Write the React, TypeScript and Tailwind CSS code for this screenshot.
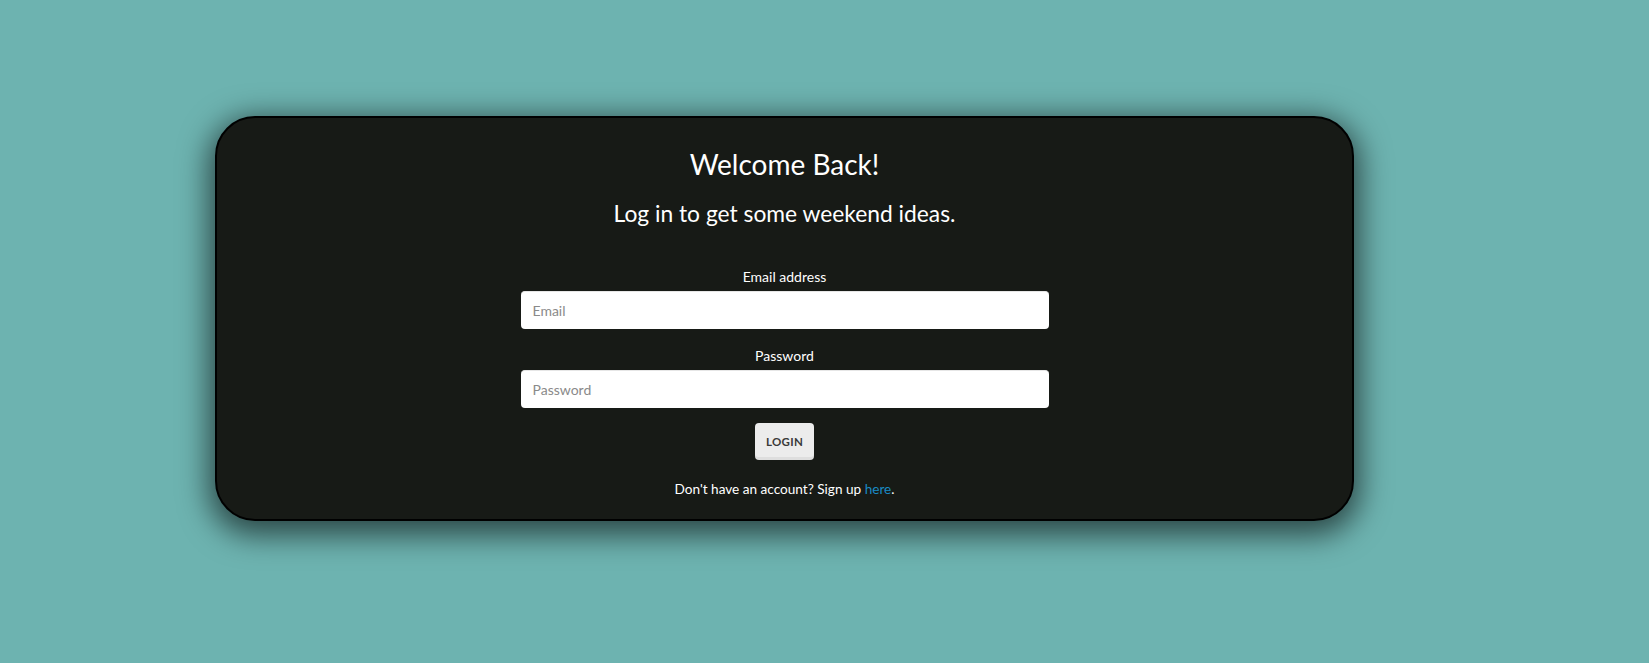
import React from "react";

export default function App() {
  return (
    <div className="min-h-screen w-full bg-[#6db3b0] pt-[116px] pl-[215px] font-['Lato',sans-serif]">
      <div className="w-[1139px] h-[405px] rounded-[40px] border-2 border-black bg-[#171a16] shadow-[0_8px_30px_6px_rgba(0,0,0,0.6)] flex flex-col items-center text-white">
        <h1 className="mt-[29px] text-[28px] leading-[34px]">Welcome Back!</h1>
        <h2 className="mt-[17px] text-[22.8px] leading-[30px]">Log in to get some weekend ideas.</h2>
        <form className="mt-[40px] flex flex-col items-center w-[528px]" onSubmit={(e) => e.preventDefault()}>
          <label className="text-[14px] leading-[18px]">Email address</label>
          <input
            type="email"
            placeholder="Email"
            className="mt-[5px] w-full h-[38px] rounded-[4px] bg-white px-[12px] text-[14px] text-black placeholder:text-[#8a8a8a] outline-none border-t border-[#e6e6e6]"
          />
          <label className="mt-[18px] text-[14px] leading-[18px]">Password</label>
          <input
            type="password"
            placeholder="Password"
            className="mt-[5px] w-full h-[38px] rounded-[4px] bg-white px-[12px] text-[14px] text-black placeholder:text-[#8a8a8a] outline-none border-t border-[#e6e6e6]"
          />
          <button
            type="submit"
            className="mt-[15px] w-[59px] h-[37px] rounded-[4px] bg-[#ececec] text-[#3a3a3a] text-[11.5px] font-bold tracking-[0.3px] shadow-[inset_0_-3px_0_rgba(0,0,0,0.06)]"
          >
            LOGIN
          </button>
        </form>
        <p className="mt-[20px] text-[13.6px] leading-[18px]">
          Don&apos;t have an account? Sign up <a className="text-[#1a8ac4]" href="#">here</a>.
        </p>
      </div>
    </div>
  );
}
